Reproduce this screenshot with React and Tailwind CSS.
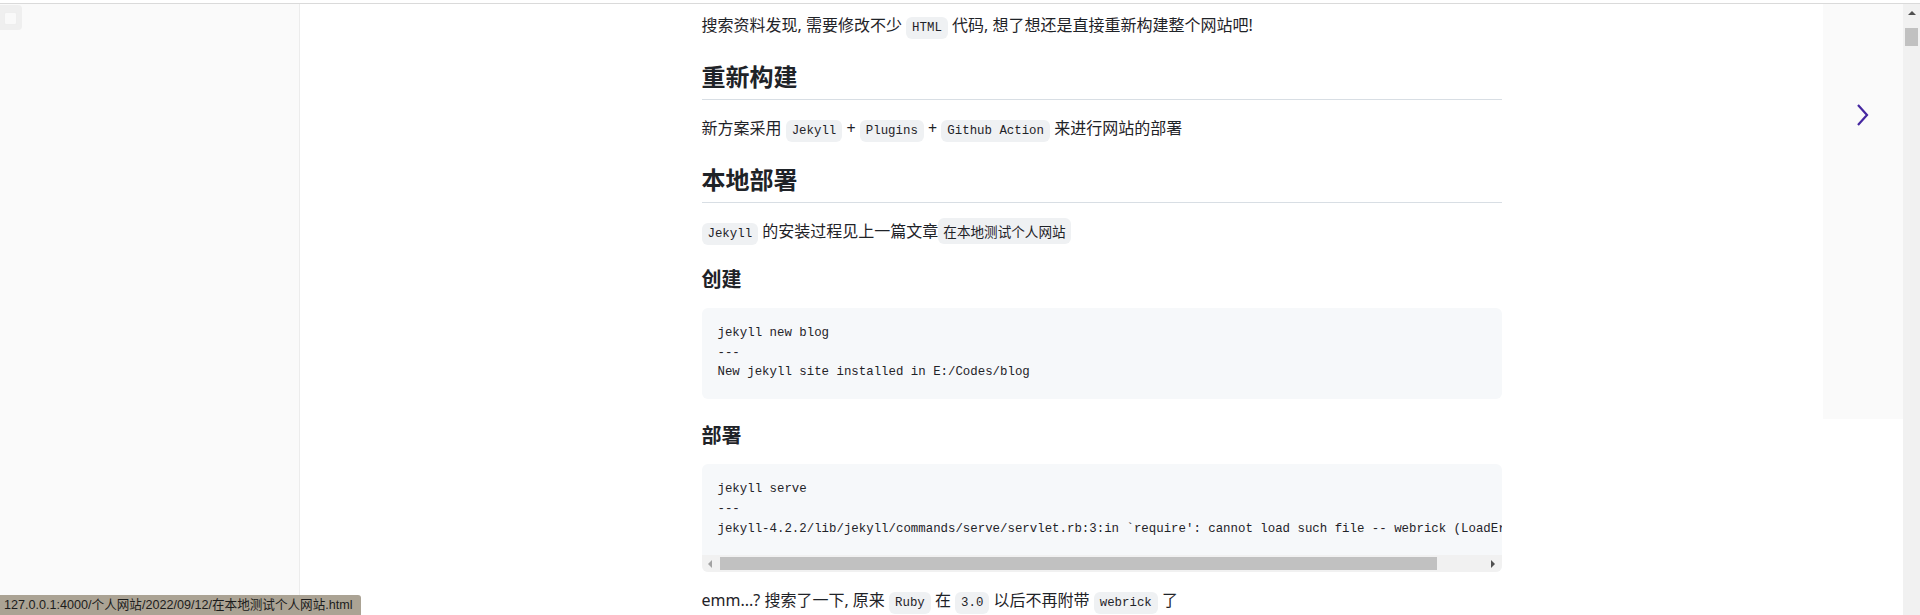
import React from "react";

const Code = ({ children }) => (
  <code className="rounded-md bg-[#eff1f3] px-[6px] py-[4px] font-['Liberation_Mono',monospace] text-[12.4px] leading-[14px]">
    {children}
  </code>
);

const CodeBlock = ({ lines, scroll }) => (
  <div className="mb-4 overflow-hidden rounded-md bg-[#f6f8fa]">
    <pre className="overflow-hidden whitespace-pre p-4 font-['Liberation_Mono',monospace] text-[12.4px] leading-[19.72px] text-[#1f2328]">
      {lines.join("\n")}
    </pre>
    {scroll && (
      <div className="flex h-[17px] bg-[#f1f1f1]">
        <div className="flex w-[17px] items-center justify-center">
          <div className="h-0 w-0 border-y-[4px] border-r-[4px] border-y-transparent border-r-[#a3a3a3]" />
        </div>
        <div className="flex flex-1 items-center pl-px">
          <div className="h-[13px] w-[717px] bg-[#c1c1c1]" />
        </div>
        <div className="flex w-[17px] items-center justify-center">
          <div className="h-0 w-0 border-y-[4px] border-l-[4px] border-y-transparent border-l-[#505050]" />
        </div>
      </div>
    )}
  </div>
);

const H2 = ({ children }) => (
  <h2 className="mt-[25px] mb-4 border-b border-[#d8dee4] pb-[7px] text-[24px] font-semibold leading-[30px]">
    {children}
  </h2>
);

const H3 = ({ children }) => (
  <h3 className="mt-6 mb-4 text-[20px] font-semibold leading-[25px]">{children}</h3>
);

const App = () => {
  return (
    <div className="relative h-[615px] w-[1920px] overflow-hidden bg-white font-['Noto_Sans','Noto_Sans_CJK_SC',sans-serif] text-[#1f2328]">
      {/* top edge */}
      <div className="h-[4px] border-b border-[#dadada]" />

      <div className="flex h-[611px]">
        {/* left sidebar */}
        <aside className="w-[300px] shrink-0 border-r border-[#ececec] bg-[#fafafa]">
          <div className="mt-px h-[25px] w-[22px] rounded-r-[4px] bg-[#efefef] pt-[7px] pl-[4px]">
            <div className="h-[13px] w-[13px] rounded-[2px] border border-[#eeeeee] bg-[#f9f9f9]" />
          </div>
        </aside>

        {/* article */}
        <main className="flex-1 overflow-hidden pt-[9px]">
          <article className="mx-auto w-[800px] text-[16px] leading-6">
            <p className="mb-4">
              搜索资料发现, 需要修改不少 <Code>HTML</Code> 代码, 想了想还是直接重新构建整个网站吧!
            </p>

            <H2>重新构建</H2>
            <p className="mb-4">
              新方案采用 <Code>Jekyll</Code> + <Code>Plugins</Code> + <Code>Github Action</Code> 来进行网站的部署
            </p>

            <H2>本地部署</H2>
            <p className="mb-4">
              <Code>Jekyll</Code> 的安装过程见上一篇文章
              <code className="rounded-md bg-[#eff1f3] px-[5px] py-[3px] font-['Noto_Sans_CJK_SC',sans-serif] text-[13.6px] leading-[14px]">
                在本地测试个人网站
              </code>
            </p>

            <H3>创建</H3>
            <CodeBlock
              lines={["jekyll new blog", "---", "New jekyll site installed in E:/Codes/blog"]}
            />

            <H3>部署</H3>
            <CodeBlock
              scroll
              lines={[
                "jekyll serve",
                "---",
                "jekyll-4.2.2/lib/jekyll/commands/serve/servlet.rb:3:in `require': cannot load such file -- webrick (LoadError)",
              ]}
            />

            <p className="mb-4">
              emm...? 搜索了一下, 原来 <Code>Ruby</Code> 在 <Code>3.0</Code> 以后不再附带 <Code>webrick</Code> 了
            </p>
          </article>
        </main>

        {/* page scrollbar */}
        <div className="w-[17px] shrink-0 bg-[#f1f1f1]">
          <div className="flex h-[17px] items-center justify-center">
            <div className="h-0 w-0 border-x-[4px] border-b-[4px] border-x-transparent border-b-[#505050]" />
          </div>
          <div className="mx-auto mt-[7px] h-[18px] w-[13px] bg-[#c1c1c1]" />
        </div>
      </div>

      {/* right toc panel */}
      <div className="absolute top-[4px] right-[17px] flex h-[415px] w-[80px] justify-center bg-[#fafafa] pt-[98px]">
        <svg width="16" height="26" viewBox="0 0 16 26" fill="none">
          <polyline points="3,3 12,13 3,23" stroke="#4527a0" strokeWidth="2.2" />
        </svg>
      </div>

      {/* status bar */}
      <div className="absolute bottom-0 left-0 h-[20px] w-[361px] rounded-tr-[3px] bg-[#aba394] pl-[4px] font-['Liberation_Sans','Noto_Sans_CJK_SC',sans-serif] text-[12.6px] leading-[20px] text-[#1c1c1c]">
        127.0.0.1:4000/个人网站/2022/09/12/在本地测试个人网站.html
      </div>
    </div>
  );
};

export default App;
